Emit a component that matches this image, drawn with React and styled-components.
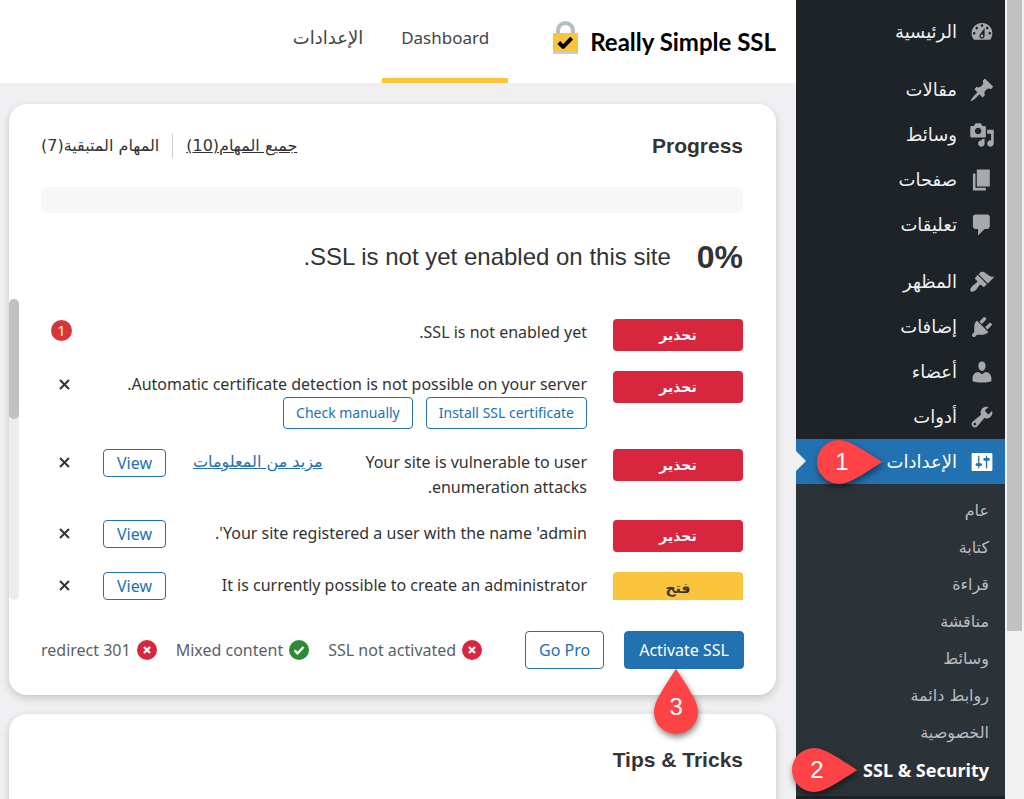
import React from "react";
import styled, { createGlobalStyle, css } from "styled-components";

const ui = `"DejaVu Sans", "Noto Sans", sans-serif`;
const latin = `"Noto Sans", "DejaVu Sans", sans-serif`;
const heading = `"Liberation Sans", Arial, sans-serif`;

const GlobalStyle = createGlobalStyle`
  *, *::before, *::after { box-sizing: border-box; }
  body { margin: 0; background: #f0f0f2; font-family: ${latin}; font-size: 16px; color: #333; }
  button { font: inherit; cursor: pointer; }
  h1, h2, p, ul { margin: 0; padding: 0; }
  ul { list-style: none; }
`;

const Shell = styled.div`
  display: flex;
  height: 100vh;
  overflow: hidden;
`;

const PageScroll = styled.div`
  flex: 0 0 19px;
  padding: 0 2px;
  background: #f1f1f1;
`;

const PageThumb = styled.div`
  height: 79%;
  background: #c1c1c1;
`;

const Sidebar = styled.nav`
  position: relative;
  z-index: 1;
  flex: 0 0 209px;
  padding-top: 9px;
  background: #1d2327;
  font-family: ${ui};
`;

const MenuGroup = styled.ul`
  & + & { margin-top: 13px; }
  &:last-of-type { margin-top: 12px; }
`;

const MenuItem = styled.li`
  position: relative;
`;

const MenuLink = styled.a`
  position: relative;
  display: flex;
  align-items: center;
  gap: 12px;
  height: 45px;
  padding: 0 10px;
  color: #f0f0f1;
  font-size: 18px;
  line-height: 24px;
  text-decoration: none;
  svg { flex: none; width: 26px; height: 26px; fill: #a7aaad; }
  ${(p) =>
    p.$active &&
    css`
      background: #2271b1;
      color: #fff;
      svg { fill: #fff; }
      &::after {
        content: "";
        position: absolute;
        left: 0;
        top: 12px;
        border: 10px solid transparent;
        border-left-color: #f0f0f2;
        border-right-width: 0;
      }
    `}
`;

const Submenu = styled.div`
  padding: 8px 0;
  background: #2c3338;
`;

const SubLink = styled.a`
  display: flex;
  align-items: center;
  height: 37px;
  padding: 0 16px;
  color: #b9bcc0;
  font-size: 16px;
  line-height: 24px;
  text-decoration: none;
  ${(p) =>
    p.$current &&
    css`
      color: #fff;
      font-family: ${latin};
      font-size: 18px;
      font-weight: 700;
    `}
`;

const Main = styled.main`
  flex: 1;
  min-width: 0;
  display: flex;
  flex-direction: column;
`;

const Header = styled.header`
  flex: none;
  display: flex;
  height: 83px;
  padding: 0 20px;
  background: #fff;
`;

const Brand = styled.a`
  display: flex;
  align-items: center;
  gap: 12px;
  margin-left: 45px;
  color: #000;
  text-decoration: none;
  white-space: nowrap;
  svg { flex: none; width: 25px; height: 34px; margin-bottom: 8px; }
`;

const BrandName = styled.span`
  font-family: Lato, "Noto Sans", sans-serif;
  font-size: 24px;
  font-weight: 700;
  line-height: 28px;
`;

const Tab = styled.a`
  padding: 24px 19px 0;
  border-bottom: 5px solid ${(p) => (p.$active ? "#fbc43d" : "transparent")};
  color: #444;
  font-size: 17px;
  line-height: 28px;
  text-decoration: none;
`;

const ArabicTab = styled(Tab)`
  font-family: ${ui};
  font-size: 18px;
`;

const Content = styled.div`
  flex: 1;
  display: flex;
  flex-direction: column;
  gap: 19px;
  padding: 21px 20px 0 9px;
`;

const Card = styled.section`
  flex: none;
  min-height: ${(p) => p.$minHeight || "0"};
  background: #fff;
  border-radius: 18px;
  box-shadow: 0 3px 8px rgba(0, 0, 0, 0.18);
`;

const CardHead = styled.div`
  display: flex;
  justify-content: space-between;
  align-items: center;
  padding: ${(p) => p.$top || "28px"} 33px 0 32px;
`;

const Title = styled.h2`
  font-family: ${heading};
  font-size: 21px;
  line-height: 28px;
`;

const Filters = styled.div`
  display: flex;
  align-items: center;
  font-family: ${ui};
  font-size: 16px;
  line-height: 24px;
`;

const Filter = styled.a`
  padding: 0 13px;
  color: #333;
  text-decoration: ${(p) => (p.$current ? "underline" : "none")};
  & + & { border-right: 1px solid #ccc; }
  &:last-child { padding-left: 0; }
`;

const Bar = styled.div`
  height: 26px;
  margin: 27px 33px 0 32px;
  border-radius: 8px;
  background: #f7f7f7;
`;

const Summary = styled.div`
  display: flex;
  align-items: center;
  gap: 26px;
  padding: 24px 33px 0;
  font-family: ${heading};
  font-size: 24px;
  line-height: 40px;
`;

const Percent = styled.strong`
  font-size: 32px;
`;

const TaskPane = styled.div`
  display: flex;
  height: 301px;
  margin-top: 22px;
  overflow: hidden;
`;

const TaskList = styled.ul`
  flex: 1;
  display: flex;
  flex-direction: column;
  gap: 20px;
  padding: 20px 33px 0 32px;
`;

const TaskTrack = styled.div`
  flex: 0 0 10px;
  border-radius: 5px;
  background: #ededed;
`;

const TaskThumb = styled.div`
  height: 120px;
  border-radius: 5px;
  background: #c1c1c1;
`;

const Task = styled.li`
  display: flex;
  align-items: flex-start;
  line-height: 25px;
`;

const Tag = styled.span`
  flex: 0 0 130px;
  height: 32px;
  margin-left: 26px;
  border-radius: 4px;
  background: ${(p) => (p.$open ? "#fbc43d" : "#d7263d")};
  color: ${(p) => (p.$open ? "#333" : "#fff")};
  font-family: ${ui};
  font-size: 14px;
  font-weight: 700;
  line-height: 32px;
  text-align: center;
`;

const TaskText = styled.div`
  flex: 1;
  min-width: 0;
  padding-top: 1px;
`;

const TaskButtons = styled.div`
  display: flex;
  gap: 13px;
`;

const OutlineButton = styled.button`
  flex: none;
  height: ${(p) => p.$height}px;
  padding: 0 13px;
  border: 1px solid #2271b1;
  border-radius: 4px;
  background: #fff;
  color: #2271b1;
  line-height: 24px;
  white-space: nowrap;
`;

const SmallButton = styled(OutlineButton)`
  padding: 0 12px;
  font-size: 14px;
`;

const SolidButton = styled(OutlineButton)`
  position: relative;
  padding: 0 14px;
  background: #2271b1;
  color: #fff;
`;

const MoreLink = styled.a`
  flex: none;
  margin: 0 27px;
  color: #2271b1;
  font-family: ${ui};
`;

const Control = styled.div`
  flex: 0 0 27px;
  display: flex;
  justify-content: flex-end;
  margin-right: 25px;
`;

const Dismiss = styled.button`
  display: grid;
  place-items: center;
  width: 27px;
  height: 27px;
  padding: 0;
  border: 0;
  background: none;
  svg { width: 11px; height: 11px; stroke: #333; stroke-width: 2; }
`;

const Count = styled.span`
  width: 21px;
  height: 21px;
  margin-top: 1px;
  border-radius: 50%;
  background: #d63638;
  color: #fff;
  font-size: 14px;
  line-height: 21px;
  text-align: center;
`;

const CardFoot = styled.footer`
  display: flex;
  align-items: center;
  gap: 20px;
  padding: 31px 32px 26px;
`;

const Statuses = styled.ul`
  display: flex;
  gap: 19px;
  margin-right: auto;
  color: #5b5f66;
  white-space: nowrap;
`;

const Status = styled.li`
  display: flex;
  align-items: center;
  gap: 6px;
  line-height: 24px;
  svg { width: 20px; height: 20px; }
`;

const Pin = styled.span`
  position: absolute;
  z-index: 2;
  ${(p) =>
    p.$down
      ? css`top: 36px; left: 50%; width: 44px; height: 66px; margin-left: -30px;`
      : css`top: 50%; left: ${p.$left}px; width: 66px; height: 44px; margin-top: -22px;`}
  color: #fff;
  font-family: ${heading};
  font-size: 24px;
  line-height: 24px;
  pointer-events: none;
  svg {
    position: absolute;
    inset: 0;
    width: 100%;
    height: 100%;
    overflow: visible;
    fill: #fd4345;
    filter: drop-shadow(1px 3px 3px rgba(0, 0, 0, 0.5));
  }
  b {
    position: absolute;
    font-weight: 400;
    width: 44px;
    left: ${(p) => (p.$down ? 0 : 3)}px;
    top: ${(p) => (p.$down ? 27 : 10)}px;
    text-align: center;
  }
`;

const SidePin = ({ n, left }) => (
  <Pin $left={left}>
    <svg viewBox="0 0 66 44">
      <path d="M22 0C33 0 46 10 64 21.200Q66 22 64 22.800C46 34 33 44 22 44A22 22 0 0 1 22 0Z" />
    </svg>
    <b>{n}</b>
  </Pin>
);

const DownPin = ({ n }) => (
  <Pin $down>
    <svg viewBox="0 0 44 66">
      <path d="M0 44C0 33 10 20 21.200 2Q22 0 22.800 2C34 20 44 33 44 44A22 22 0 0 1 0 44Z" />
    </svg>
    <b>{n}</b>
  </Pin>
);

const icons = {
  dashboard:
    "M3.76 16h12.480c1.100-1.370 1.760-3.110 1.760-5 0-4.420-3.580-8-8-8s-8 3.580-8 8c0 1.890.66 3.630 1.760 5zM10 4c.55 0 1 .45 1 1s-.45 1-1 1-1-.45-1-1 .45-1 1-1zM6 6c.55 0 1 .45 1 1s-.45 1-1 1-1-.45-1-1 .45-1 1-1zm8 0c.55 0 1 .45 1 1s-.45 1-1 1-1-.45-1-1 .45-1 1-1zm-5.370 5.550L12 7v6c0 1.100-.9 2-2 2s-2-.9-2-2c0-.57.24-1.080.63-1.450zM4 10c.55 0 1 .45 1 1s-.45 1-1 1-1-.45-1-1 .45-1 1-1zm12 0c.55 0 1 .45 1 1s-.45 1-1 1-1-.45-1-1 .45-1 1-1zm-5 3c0-.55-.45-1-1-1s-1 .45-1 1 .45 1 1 1 1-.45 1-1z",
  post: "M10.440 3.020l1.820-1.820 6.360 6.350-1.830 1.820c-1.050-.68-2.480-.57-3.410.36l-.75.75c-.92.93-1.040 2.350-.35 3.410l-1.830 1.820-2.410-2.410-2.800 2.790c-.42.42-3.380 2.710-3.800 2.290s1.860-3.390 2.280-3.810l2.790-2.790L4.100 9.360l1.830-1.820c1.050.69 2.480.57 3.400-.36l.75-.75c.93-.92 1.050-2.350.36-3.410z",
  media:
    "M13 11V4c0-.55-.45-1-1-1h-1.670L9 1H5L3.670 3H2c-.55 0-1 .45-1 1v7c0 .55.45 1 1 1h10c.55 0 1-.45 1-1zM7 4.500c1.380 0 2.500 1.120 2.500 2.500S8.380 9.500 7 9.500 4.500 8.380 4.500 7 5.620 4.500 7 4.500zM14 6h5v10.500c0 1.380-1.120 2.500-2.500 2.500S14 17.880 14 16.500s1.120-2.500 2.500-2.500c.17 0 .34.02.5.05V9h-3V6zm-4 8.050V13h2v3.500c0 1.380-1.120 2.500-2.500 2.500S7 17.880 7 16.500 8.120 14 9.500 14c.17 0 .34.02.5.05z",
  page: "M6 15V2h10v13H6zm-1 1h8v2H3V5h2v11z",
  comments:
    "M5 2h9c1.100 0 2 .9 2 2v7c0 1.100-.9 2-2 2h-2l-5 5v-5H5c-1.100 0-2-.9-2-2V4c0-1.100.9-2 2-2z",
  appearance:
    "M14.480 11.060L7.410 3.990l1.500-1.500c.5-.56 2.300-.47 3.510.32 1.210.8 1.430 1.280 2.910 2.100 1.180.64 2.450 1.260 4.450.85zm-.71.71L6.700 4.700 4.930 6.470c-.39.39-.39 1.020 0 1.410l1.060 1.060c.39.39.39 1.030 0 1.420-.6.6-1.430 1.110-2.210 1.690-.35.26-.7.53-1.010.84C1.430 14.230.4 16.080 1.400 17.070c.99 1 2.840-.03 4.180-1.360.31-.31.58-.66.85-1.020.57-.78 1.080-1.610 1.690-2.210.39-.39 1.020-.39 1.410 0l1.060 1.060c.39.39 1.020.39 1.410 0z",
  plugins:
    "M13.110 4.360L9.870 7.600 8 5.730l3.240-3.240c.35-.34 1.050-.2 1.560.32.52.51.66 1.210.31 1.550zm-8 1.770l.91-1.120 9.010 9.010-1.190.84c-.71.71-2.630 1.160-3.820 1.160H6.140L4.900 17.260c-.59.59-1.540.59-2.120 0-.59-.58-.59-1.530 0-2.120l1.240-1.240v-3.880c0-1.130.4-3.190 1.090-3.890zm7.260 3.970l3.240-3.240c.34-.35 1.040-.21 1.550.31.52.51.66 1.210.31 1.550l-3.240 3.250z",
  users:
    "M10 9.250c-2.270 0-2.730-3.440-2.730-3.440C7 4.020 7.820 2 9.970 2c2.160 0 2.980 2.020 2.710 3.810 0 0-.41 3.440-2.680 3.440zm0 2.570L12.720 10c2.390 0 4.520 2.330 4.520 4.530v2.490s-3.650 1.130-7.240 1.130c-3.650 0-7.240-1.130-7.240-1.130v-2.490c0-2.250 1.940-4.480 4.470-4.480z",
  tools:
    "M16.680 9.770c-1.340 1.340-3.300 1.670-4.950.99l-5.410 6.520c-.99.99-2.590.99-3.580 0s-.99-2.590 0-3.570l6.520-5.420c-.68-1.650-.35-3.610.99-4.950 1.280-1.280 3.120-1.620 4.720-1.060l-2.890 2.890 2.820 2.820 2.860-2.870c.53 1.580.18 3.390-1.080 4.650zM3.810 16.210c.4.39 1.040.39 1.430 0 .4-.4.4-1.040 0-1.430-.39-.4-1.030-.4-1.430 0-.39.39-.39 1.030 0 1.430z",
  settings:
    "M18 16V4c0-.55-.45-1-1-1H3c-.55 0-1 .45-1 1v12c0 .55.45 1 1 1h14c.55 0 1-.45 1-1zM8 11h1c.55 0 1 .45 1 1s-.45 1-1 1H8v1.500c0 .28-.22.5-.5.5s-.5-.22-.5-.5V13H6c-.55 0-1-.45-1-1s.45-1 1-1h1V5.500c0-.28.22-.5.5-.5s.5.22.5.5V11zm5-2h-1c-.55 0-1-.45-1-1s.45-1 1-1h1V5.500c0-.28.22-.5.5-.5s.5.22.5.5V7h1c.55 0 1 .45 1 1s-.45 1-1 1h-1v5.500c0 .28-.22.5-.5.5s-.5-.22-.5-.5V9z",
};

const menu = [
  [{ icon: "dashboard", label: "الرئيسية" }],
  [
    { icon: "post", label: "مقالات" },
    { icon: "media", label: "وسائط" },
    { icon: "page", label: "صفحات" },
    { icon: "comments", label: "تعليقات" },
  ],
  [
    { icon: "appearance", label: "المظهر" },
    { icon: "plugins", label: "إضافات" },
    { icon: "users", label: "أعضاء" },
    { icon: "tools", label: "أدوات" },
    { icon: "settings", label: "الإعدادات", active: true },
  ],
];

const submenu = ["عام", "كتابة", "قراءة", "مناقشة", "وسائط", "روابط دائمة", "الخصوصية"];

const tasks = [
  { text: "SSL is not enabled yet.", count: 1 },
  {
    text: "Automatic certificate detection is not possible on your server.",
    buttons: ["Install SSL certificate", "Check manually"],
  },
  {
    text: "Your site is vulnerable to user enumeration attacks.",
    more: "مزيد من المعلومات",
    view: true,
  },
  { text: "Your site registered a user with the name 'admin'.", view: true },
  { text: "It is currently possible to create an administrator", view: true, open: true },
];

const statuses = [
  { label: "SSL not activated", ok: false },
  { label: "Mixed content", ok: true },
  { label: "redirect 301", ok: false },
];

const StatusIcon = ({ ok }) => (
  <svg viewBox="0 0 20 20" fill="none" stroke="#fff" strokeWidth="2.400">
    <circle cx="10" cy="10" r="10" fill={ok ? "#2e8a37" : "#d7263d"} stroke="none" />
    <path d={ok ? "M5.500 10.300l3 3 6-6.300" : "M7 7l6 6M13 7l-6 6"} />
  </svg>
);

export default function App() {
  return (
    <>
      <GlobalStyle />
      <Shell dir="rtl" lang="ar">
        <PageScroll>
          <PageThumb />
        </PageScroll>
        <Sidebar>
          {menu.map((group, i) => (
            <MenuGroup key={i}>
              {group.map((m) => (
                <MenuItem key={m.icon}>
                  <MenuLink href="#" $active={m.active}>
                    <svg viewBox="0 0 20 20">
                      <path d={icons[m.icon]} fillRule="evenodd" />
                    </svg>
                    {m.label}
                  </MenuLink>
                  {m.active && <SidePin n="1" left={21} />}
                </MenuItem>
              ))}
            </MenuGroup>
          ))}
          <Submenu>
            <ul>
              {submenu.map((label) => (
                <li key={label}>
                  <SubLink href="#">{label}</SubLink>
                </li>
              ))}
              <MenuItem>
                <SubLink href="#" $current>
                  SSL &amp; Security
                </SubLink>
                <SidePin n="2" left={-4} />
              </MenuItem>
            </ul>
          </Submenu>
        </Sidebar>
        <Main>
          <Header>
            <Brand href="#">
              <BrandName>Really Simple SSL</BrandName>
              <svg viewBox="0 0 25 34">
                <path d="M5 13V9.500a7.500 7.500 0 0 1 15 0V13" fill="none" stroke="#b3bfc6" strokeWidth="4" />
                <path d="M0 12h25v19H0z" fill="#fbc43d" />
                <path d="M0 31h25v2H0z" fill="#c3cdd3" />
                <path d="M5.800 21.500l4.300 4.300 8.600-8.600" fill="none" stroke="#000" strokeWidth="4" strokeLinejoin="round" />
              </svg>
            </Brand>
            <Tab href="#" $active>
              Dashboard
            </Tab>
            <ArabicTab href="#">الإعدادات</ArabicTab>
          </Header>
          <Content>
            <Card>
              <CardHead>
                <Title>Progress</Title>
                <Filters>
                  <Filter href="#" $current>
                    جميع المهام(10)
                  </Filter>
                  <Filter href="#">المهام المتبقية(7)</Filter>
                </Filters>
              </CardHead>
              <Bar role="progressbar" aria-valuenow={0} />
              <Summary>
                <Percent>0%</Percent>
                <p>SSL is not yet enabled on this site.</p>
              </Summary>
              <TaskPane>
                <TaskList>
                  {tasks.map((t) => (
                    <Task key={t.text}>
                      <Tag $open={t.open}>{t.open ? "فتح" : "تحذير"}</Tag>
                      <TaskText>
                        <p>{t.text}</p>
                        {t.buttons && (
                          <TaskButtons>
                            {t.buttons.map((b) => (
                              <SmallButton key={b} $height={32}>
                                {b}
                              </SmallButton>
                            ))}
                          </TaskButtons>
                        )}
                      </TaskText>
                      {t.more && <MoreLink href="#">{t.more}</MoreLink>}
                      {t.view && <OutlineButton $height={28}>View</OutlineButton>}
                      <Control>
                        {t.count ? (
                          <Count>{t.count}</Count>
                        ) : (
                          <Dismiss aria-label="Dismiss">
                            <svg viewBox="0 0 11 11">
                              <path d="M1 1l9 9M10 1l-9 9" />
                            </svg>
                          </Dismiss>
                        )}
                      </Control>
                    </Task>
                  ))}
                </TaskList>
                <TaskTrack>
                  <TaskThumb />
                </TaskTrack>
              </TaskPane>
              <CardFoot>
                <SolidButton $height={38}>
                  Activate SSL
                  <DownPin n="3" />
                </SolidButton>
                <OutlineButton $height={38}>Go Pro</OutlineButton>
                <Statuses>
                  {statuses.map((s) => (
                    <Status key={s.label}>
                      <StatusIcon ok={s.ok} />
                      {s.label}
                    </Status>
                  ))}
                </Statuses>
              </CardFoot>
            </Card>
            <Card $minHeight="240px">
              <CardHead $top="32px">
                <Title>Tips &amp; Tricks</Title>
              </CardHead>
            </Card>
          </Content>
        </Main>
      </Shell>
    </>
  );
}
